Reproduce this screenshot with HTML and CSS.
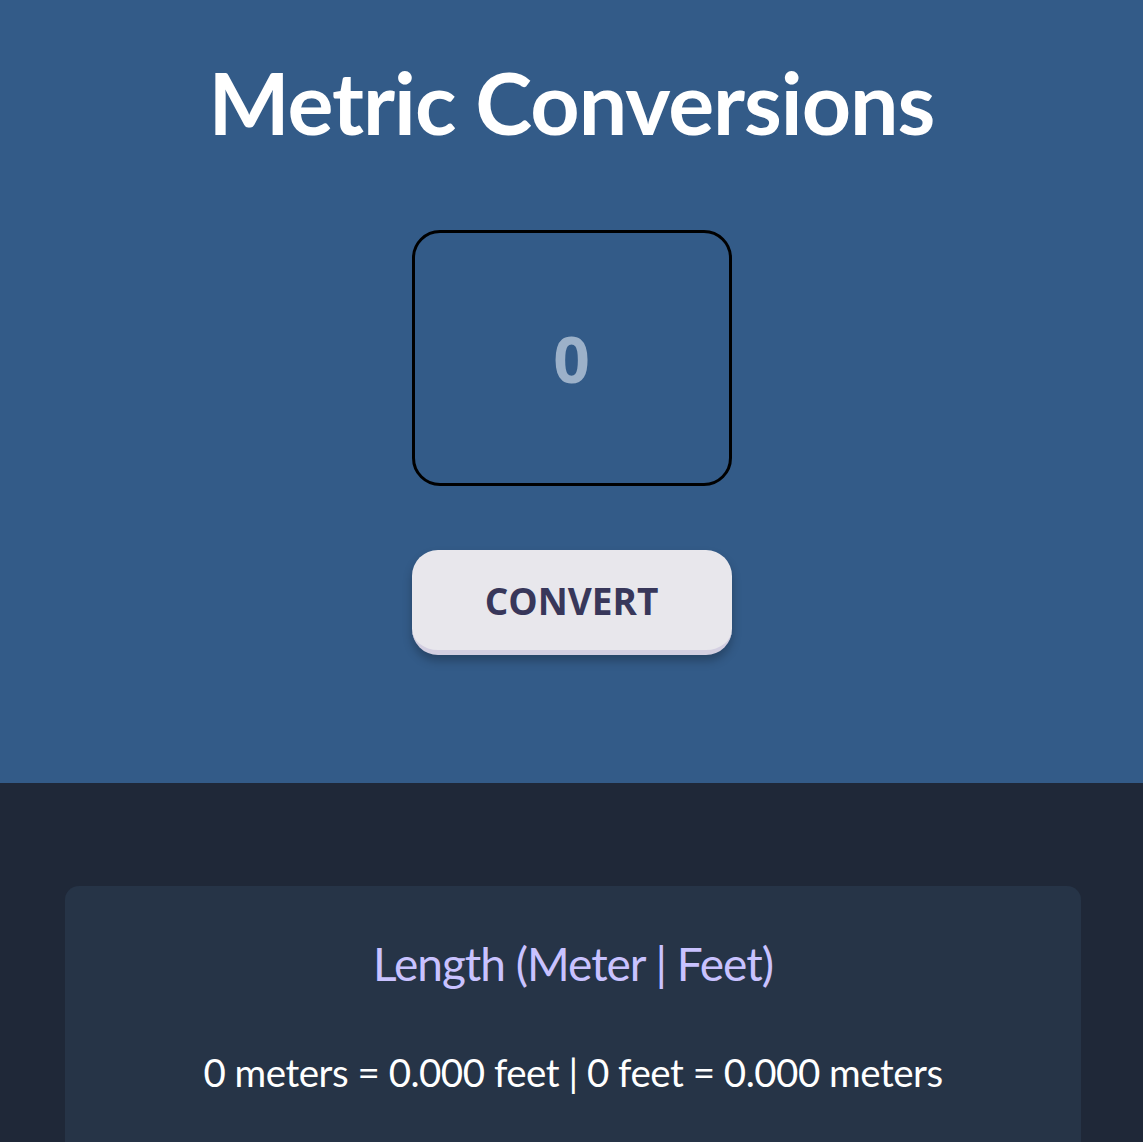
FILE: index.html
```html
<!DOCTYPE html>
<html lang="en">
<head>
<meta charset="utf-8">
<title>Metric Conversions</title>
<link rel="stylesheet" href="styles.css">
</head>
<body>
<header class="hero">
  <h1 class="title">Metric Conversions</h1>
  <input class="amount" type="text" placeholder="0">
  <button class="convert">CONVERT</button>
</header>
<main class="results">
  <section class="card">
    <h2 class="card-title">Length (Meter | Feet)</h2>
    <p class="card-text">0 meters = 0.000 feet | 0 feet = 0.000 meters</p>
  </section>
</main>
</body>
</html>
```
FILE: styles.css
```css
html, body {
  margin: 0;
  padding: 0;
}
body {
  background: #1f2838;
  font-family: "Lato", "Open Sans", sans-serif;
  overflow: hidden;
}
.hero {
  background: #335b88;
  height: 783px;
  display: flex;
  flex-direction: column;
  align-items: center;
  box-sizing: border-box;
  padding-top: 46px;
}
.title {
  margin: 0;
  color: #ffffff;
  font-family: "Lato", sans-serif;
  font-weight: 700;
  font-size: 86px;
  line-height: 112px;
  letter-spacing: -1px;
}
.amount {
  margin-top: 72px;
  width: 320px;
  height: 256px;
  box-sizing: border-box;
  border: 3px solid #000000;
  border-radius: 28px;
  background: transparent;
  text-align: center;
  font-family: "Open Sans", sans-serif;
  font-weight: 700;
  font-size: 64px;
  color: #ffffff;
  outline: none;
}
.amount::placeholder {
  color: #9cb1c9;
  opacity: 1;
}
.convert {
  margin-top: 64px;
  width: 320px;
  height: 105px;
  box-sizing: border-box;
  border: none;
  border-bottom: 5px solid #d3cfe1;
  border-radius: 26px;
  background: #e8e7ec;
  color: #38375a;
  font-family: "Open Sans", sans-serif;
  font-weight: 700;
  font-size: 37px;
  box-shadow: 0 6px 10px rgba(0, 0, 0, 0.25);
  padding: 0;
}
.results {
  padding: 103px 62px 0 65px;
}
.card {
  background: #263447;
  border-radius: 14px;
  height: 300px;
  display: flex;
  flex-direction: column;
  align-items: center;
  padding-top: 46px;
  box-sizing: border-box;
}
.card-title {
  margin: 0;
  color: #c9c2ff;
  font-weight: 400;
  font-size: 46px;
  line-height: 64px;
  letter-spacing: -1px;
}
.card-text {
  margin: 50px 0 0;
  color: #ffffff;
  font-size: 38.5px;
  line-height: 52px;
  letter-spacing: -0.5px;
}
```
